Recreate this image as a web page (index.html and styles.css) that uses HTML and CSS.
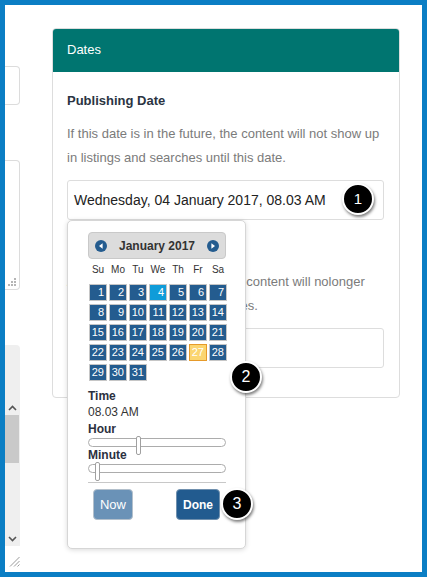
FILE: index.html
```html
<!DOCTYPE html>
<html>
<head>
<meta charset="utf-8">
<link rel="stylesheet" href="styles.css">
</head>
<body>
<div class="frame">
  <aside class="side">
    <div class="side-box b1"></div>
    <div class="side-box b2">
      <svg class="dots" width="8" height="8" viewBox="0 0 8 8"><g fill="#b5b5b5"><rect x="6" y="0" width="2" height="2"/><rect x="3" y="3" width="2" height="2"/><rect x="6" y="3" width="2" height="2"/><rect x="0" y="6" width="2" height="2"/><rect x="3" y="6" width="2" height="2"/><rect x="6" y="6" width="2" height="2"/></g></svg>
    </div>
    <div class="side-scroll">
      <div class="sc-pad"></div>
      <div class="sc-btn"><svg width="9" height="6" viewBox="0 0 9 6"><polyline points="1,5 4.5,1.5 8,5" fill="none" stroke="#555" stroke-width="1.6"/></svg></div>
      <div class="sc-thumb"></div>
      <div class="sc-track"></div>
      <div class="sc-btn"><svg width="9" height="6" viewBox="0 0 9 6"><polyline points="1,1 4.5,4.5 8,1" fill="none" stroke="#555" stroke-width="1.6"/></svg></div>
      <div class="sc-corner"><svg width="11" height="11" viewBox="0 0 11 11"><g stroke="#9a9a9a" stroke-width="1"><line x1="10.5" y1="1" x2="1" y2="10.5"/><line x1="10.5" y1="5" x2="5" y2="10.5"/><line x1="10.5" y1="8.5" x2="8.5" y2="10.5"/></g></svg></div>
    </div>
  </aside>
  <main class="main">
    <section class="panel">
      <header class="panel-head">Dates</header>
      <div class="panel-body">
        <div class="field">
          <label class="field-label">Publishing Date</label>
          <p class="field-help">If this date is in the future, the content will not show up in listings and searches until this date.</p>
          <div class="input-wrap">
            <div class="input">Wednesday, 04 January 2017, 08.03 AM</div>
            <span class="badge badge-1">1</span>
            <div class="picker">
              <div class="dp-head">
                <svg width="12" height="12" viewBox="0 0 12 12"><circle cx="6" cy="6" r="6" fill="#245c8f"/><path d="M7.6 3.2 L4 6 L7.6 8.8 Z" fill="#fff"/></svg>
                <span class="dp-title">January 2017</span>
                <svg width="12" height="12" viewBox="0 0 12 12"><circle cx="6" cy="6" r="6" fill="#245c8f"/><path d="M4.4 3.2 L8 6 L4.4 8.8 Z" fill="#fff"/></svg>
              </div>
              <div class="dp-names">
                <span>Su</span><span>Mo</span><span>Tu</span><span>We</span><span>Th</span><span>Fr</span><span>Sa</span>
              </div>
              <div class="dp-days">
                <span>1</span><span>2</span><span>3</span><span class="today">4</span><span>5</span><span>6</span><span>7</span>
                <span>8</span><span>9</span><span>10</span><span>11</span><span>12</span><span>13</span><span>14</span>
                <span>15</span><span>16</span><span>17</span><span>18</span><span>19</span><span>20</span><span>21</span>
                <span>22</span><span>23</span><span>24</span><span>25</span><span>26</span><span class="sel">27</span><span>28</span>
                <span>29</span><span>30</span><span>31</span>
              </div>
              <div class="dp-label dp-time-label">Time</div>
              <div class="dp-time">08.03 AM</div>
              <div class="dp-label dp-sub">Hour</div>
              <div class="slider"><span class="handle h-hour"></span></div>
              <div class="dp-label dp-sub2">Minute</div>
              <div class="slider"><span class="handle h-min"></span></div>
              <div class="dp-sep"></div>
              <div class="dp-buttons">
                <button class="btn btn-now">Now</button>
                <button class="btn btn-done">Done</button>
              </div>
              <span class="badge badge-2">2</span>
              <span class="badge badge-3">3</span>
            </div>
          </div>
        </div>
        <div class="field">
          <label class="field-label">Expiry Date</label>
          <p class="field-help">After this date has passed, the content will nolonger show up in listings and searches.</p>
          <div class="input-wrap">
            <div class="input"></div>
          </div>
        </div>
      </div>
    </section>
  </main>
</div>
</body>
</html>
```
FILE: styles.css
```css
* { box-sizing: border-box; }
html, body { margin: 0; padding: 0; background: #fff; }
body { font-family: "Liberation Sans", Arial, sans-serif; }

.frame {
  width: 427px;
  height: 577px;
  border: 5px solid #0b7ec4;
  display: grid;
  grid-template-columns: 15px 348px;
  column-gap: 32px;
  align-items: start;
  background: #fff;
  overflow: hidden;
}

/* clipped left column */
.side { display: flex; flex-direction: column; }
.side-box {
  border: 1px solid #dcdcdc;
  border-left: 0;
  border-radius: 0 4px 4px 0;
  background: #fff;
}
.b1 { margin-top: 61px; height: 39px; }
.b2 { margin-top: 55px; height: 130px; display: flex; justify-content: flex-end; align-items: flex-end; padding: 0 3px 3px 0; }
.side-scroll {
  margin-top: 55px;
  height: 223px;
  background: #efefef;
  border-radius: 0 4px 0 0;
  display: flex;
  flex-direction: column;
}
.sc-pad { height: 55px; }
.sc-btn { height: 15px; width: 14px; display: flex; align-items: center; justify-content: center; }
.sc-thumb { height: 48px; width: 14px; background: #c9c9c9; }
.sc-track { flex: 1; }
.sc-corner { height: 22px; background: #fff; display: flex; justify-content: flex-end; align-items: flex-end; padding: 0 0 1px 0; }

/* panel */
.main { padding-top: 23px; }
.panel {
  border: 1px solid #dddddd;
  border-radius: 4px;
  background: #fff;
}
.panel-head {
  height: 43px;
  line-height: 42px;
  background: #007570;
  color: #fff;
  font-size: 13px;
  padding-left: 14px;
  border-radius: 3px 3px 0 0;
}
.panel-body { padding: 20px 15px 29px 14px; }
.field + .field { margin-top: 20px; }
.field-label {
  display: block;
  font-size: 13px;
  font-weight: bold;
  line-height: 18px;
  color: #2b3442;
}
.field-help {
  margin: 12px 0 10px;
  font-size: 13px;
  line-height: 24px;
  color: #7b7b7b;
}
.input-wrap { position: relative; }
.input {
  height: 40px;
  border: 1px solid #dddddd;
  border-radius: 3px;
  padding: 0 6px;
  font-size: 14px;
  line-height: 38px;
  color: #222;
}

/* badges */
.badge {
  position: absolute;
  width: 32px;
  height: 32px;
  border-radius: 50%;
  background: #000;
  border: 2px solid #fff;
  box-shadow: 1px 2px 3px rgba(0,0,0,0.5);
  color: #fff;
  font-size: 16px;
  line-height: 28px;
  text-align: center;
  z-index: 3;
}
.badge-1 { left: 275px; top: 3px; font-size: 15px; }
.badge-2 { left: 162px; top: 140px; }
.badge-3 { left: 153px; top: 267px; }

/* datepicker */
.picker {
  position: absolute;
  top: 100%;
  left: 0;
  width: 179px;
  background: #fff;
  border: 1px solid #d6d6d6;
  border-radius: 5px;
  box-shadow: 0 1px 5px rgba(0,0,0,0.15);
  padding: 11px 19px 28px 20px;
  z-index: 2;
}
.dp-head {
  height: 27px;
  background: #dcdcdc;
  border: 1px solid #c9c9c9;
  border-radius: 4px;
  display: flex;
  align-items: center;
  justify-content: space-between;
  padding: 0 6px 0 6px;
}
.dp-head svg { display: block; }
.dp-title { font-size: 12px; font-weight: bold; color: #333; }
.dp-names {
  margin: 4px 0 0 1px;
  display: grid;
  grid-template-columns: repeat(7, 18px);
  column-gap: 2px;
  height: 14px;
  line-height: 14px;
  font-size: 10px;
  color: #333;
  text-align: center;
}
.dp-days {
  margin: 7px 0 0 1px;
  display: grid;
  grid-template-columns: repeat(7, 18px);
  grid-auto-rows: 17px;
  column-gap: 2px;
  row-gap: 3px;
}
.dp-days span {
  background: #245c8f;
  border: 1px solid #c6c6c6;
  color: #fff;
  font-size: 11px;
  line-height: 15px;
  text-align: right;
  padding-right: 2px;
}
.dp-days .today { background: #0f9cd9; }
.dp-days .sel { background: #fbd570; border-color: #e69a2a; }

.dp-label { font-size: 12px; font-weight: bold; color: #2b3040; line-height: 16px; }
.dp-time-label { margin-top: 7px; }
.dp-time { font-size: 12px; color: #333; line-height: 16px; }
.dp-sub { margin-top: 2px; line-height: 14px; }
.dp-sub2 { margin-top: 1px; line-height: 14px; }
.slider {
  position: relative;
  margin-top: 2px;
  height: 9px;
  border: 1px solid #acacac;
  border-radius: 5px;
  background: #fff;
}
.handle {
  position: absolute;
  top: -3px;
  width: 5px;
  height: 19px;
  border: 1px solid #a0a0a0;
  border-radius: 2px;
  background: #fff;
}
.h-hour { left: 47px; }
.h-min { left: 6px; }
.dp-sep { margin-top: 9px; height: 1px; background: #c8c8c8; }
.dp-buttons {
  margin-top: 6px;
  display: flex;
  justify-content: space-between;
  padding: 0 6px 0 5px;
}
.btn {
  height: 31px;
  border-radius: 4px;
  font-family: "Liberation Sans", Arial, sans-serif;
  font-size: 12px;
  color: #fff;
  padding: 0;
}
.btn-now { width: 40px; background: #6a92b7; border: 1px solid #b3c0cc; font-size: 13px; }
.btn-done { width: 44px; background: #225b8f; border: 1px solid #7090ae; font-weight: bold; }
```
